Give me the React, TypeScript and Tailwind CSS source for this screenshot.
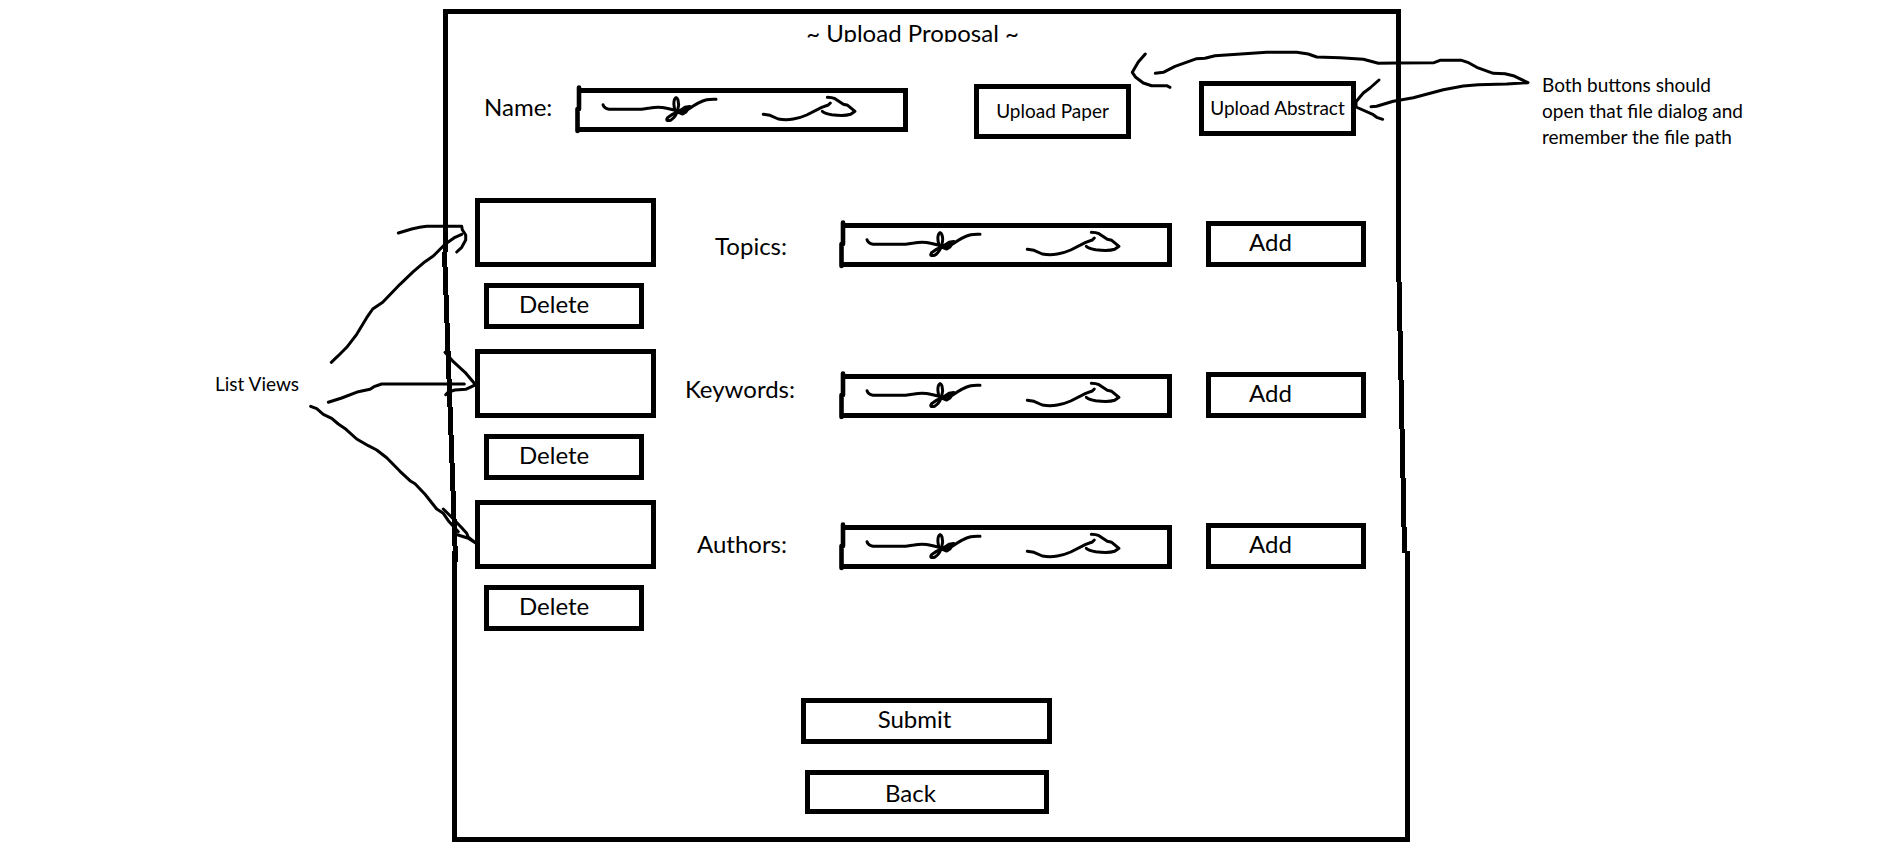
type Row = { id: string; label: string; labelClass: string };

const rows: Row[] = [
  { id: "topics", label: "Topics:", labelClass: "pt-8 pr-13" },
  { id: "keywords", label: "Keywords:", labelClass: "pt-6 pr-11" },
  { id: "authors", label: "Authors:", labelClass: "pt-7 pr-13" },
];

/* Text box with a pen-drawn left edge and scribbled contents. */
function SketchInput({ id }: { id: string }) {
  return (
    <div className="relative h-11 w-[333px] shrink-0 pl-[3px]">
      <input
        id={id}
        type="text"
        className="block h-full w-full border-[5px] border-l-0 border-black bg-white px-3 text-lg outline-none"
      />
      <svg
        className="pointer-events-none absolute top-0 left-0 overflow-visible"
        width="333"
        height="44"
        fill="none"
        stroke="black"
        strokeWidth="3"
        strokeLinecap="round"
        strokeLinejoin="round"
        aria-hidden="true"
      >
        <path d="M4 -0.5V21M2.5 21V43" strokeWidth="4.6" />
        <path d="M28 16.7Q29 20.5 34 21.3H66.7L75 20Q84 18.200 91.700 20.300L100 22.300Q98 15 99.500 11.500Q101.500 7.500 103 12Q104.500 17 102.700 22Q101 29 95.700 32.300Q89.500 33.500 93 29.300Q97 26 103.300 23.700L110 19.300L114.800 18.500L111 24L107.700 26L104 24.700L113.300 21.300Q124 13.500 131.700 11.700Q136 11 141 11.300" />
        <path d="M188.300 26.300L195 27.300L203.300 31Q211 32.300 218.300 31Q225 30 231.700 27L246.700 19.300L253.300 17L255.300 15" />
        <path d="M252.300 9.300Q257 9.300 260 10.700L268.300 16.300L272.700 17.300L280 23.300L275.700 26.300Q269 28.500 256.700 26.700Q250 25.500 247.300 23.300" />
      </svg>
    </div>
  );
}

/* Outline of the form: straight on top, drifting sides, straight below. */
function Frame() {
  return (
    <div className="pointer-events-none absolute inset-0 flex flex-col" aria-hidden="true">
      <div className="mr-[9px] h-[243px] border-x-[5px] border-t-[5px] border-black" />
      <div className="relative flex h-[299px] justify-between">
        <svg width="18" height="310" className="-ml-px shrink-0 overflow-visible" shapeRendering="crispEdges">
          <path d="M0 0H5V15H6V43H7V71H8V99H9V127H10V155H11V183H12V211H13V239H14V267H15V294H16V310H11V294H10V267H9V239H8V211H7V183H6V155H5V127H4V99H3V71H2V43H1V15H0Z" />
        </svg>
        <svg width="14" height="301" className="shrink-0 overflow-visible" shapeRendering="crispEdges">
          <path d="M0 0H5V30H6V79H7V128H8V177H9V226H10V275H11V299H14V301H6V275H5V226H4V177H3V128H2V79H1V30H0Z" />
        </svg>
      </div>
      <div className="ml-[9px] flex-1 border-x-[5px] border-b-[5px] border-black" />
    </div>
  );
}

function Arrows() {
  return (
    <svg
      className="pointer-events-none absolute top-0 left-0 z-10 overflow-visible"
      width="967"
      height="833"
      fill="none"
      stroke="black"
      strokeWidth="3"
      strokeLinecap="round"
      strokeLinejoin="round"
      aria-hidden="true"
    >
      <g transform="translate(-443 -9)">
        <path d="M398.300 233L411.700 229Q420 226.800 426.700 226.300H461.700L462.300 229.700L465.700 235V240L461.700 247.300L456.700 252" />
        <path d="M331.300 362.300L338.300 355.700L346.700 347.300L356.700 334.300L366.700 317.700L372.700 309L382.700 302.300L400 284.300L413.300 271.700L425 261.700L433.300 256L445 244.300L455 237.300L461.700 234.300" />
        <path d="M328.300 402.300L341.700 398L358.300 391.700L370 389.300L374 386.700L381.700 384H464.300" />
        <path d="M445 352.300L453.300 361.700L465 372.300L474.300 383.300V385.300L465.700 389.300L455 390L448.300 392L445.700 394.700" />
        <path d="M310.700 406.300L316.700 408.700L323.300 414.300L331.700 418.300L338.300 424L346 429.300L356.700 439L368.300 445.700L376.700 450L386.700 457.700L400 471.300L410 480.700L415 483.700L425 494.300L436.700 509L443.300 513.300L448.300 520.700L458.300 531.700" />
        <path d="M443.300 509L451.700 517.300L461.700 527.700L466.700 533.300L468.300 537.300L476 543.300M455 534L468.300 538.300L476 543.300" />
        <path d="M1155.300 73.300L1163.300 72.300L1175 66.300L1196.700 58.700L1205 58.300L1215 55.700L1266.700 52.300H1296.700L1308.300 54L1316.700 57L1340 57.700L1363.300 59.300L1378.300 63.300L1396.700 63L1434 62.700L1440 60.300H1461.700L1467.700 62.300L1476.700 67.300L1493.300 73.300L1505 73.700L1513.300 75.700L1528 82.700L1506.700 84L1478.300 84.700L1463.300 86L1443.300 89.700L1413.300 97.700L1393.300 101.300L1376.700 106.300L1371 106.700" />
        <path d="M1145.300 54L1138.300 62L1132.300 72.300L1135.700 77.300L1143.300 83L1151.700 85.700H1166.700L1170 87.300" />
        <path d="M1379 80L1370 88L1363.300 93L1356 101.700V107L1373.300 114.700L1376.700 117.300L1382.700 119.300" />
      </g>
    </svg>
  );
}

const box = "shrink-0 border-[5px] border-black bg-white";

export default function App() {
  return (
    <main className="grid min-h-screen grid-cols-[minmax(0,443fr)_967px_minmax(0,491fr)] items-start overflow-x-hidden bg-white pt-[9px] font-['Lato',sans-serif] text-2xl leading-8 text-black">
      <aside className="pt-[362px] pr-36 text-right text-[19px] leading-[26px] whitespace-nowrap">List Views</aside>

      <section className="relative pb-7">
        <Frame />
        <Arrows />

        <h1 className="h-[33px] overflow-hidden pt-2 pr-7 text-center">~ Upload Proposal ~</h1>

        <div className="mt-[39px] flex h-[58px] items-center pl-[41px]">
          <label htmlFor="name" className="w-[91px] shrink-0 pb-1.5">
            Name:
          </label>
          <SketchInput id="name" />
          <button
            type="button"
            className={`${box} ml-[66px] h-[55px] w-[157px] self-end pb-0.5 text-[19px] whitespace-nowrap`}
          >
            Upload Paper
          </button>
          <button
            type="button"
            className={`${box} ml-[68px] h-[55px] w-[157px] self-start pb-0.5 text-[19px] whitespace-nowrap`}
          >
            Upload Abstract
          </button>
        </div>

        <div className="mt-[59px] flex flex-col gap-5 pl-8">
          {rows.map((row) => (
            <div key={row.id}>
              <div className="flex h-[69px] items-end">
                <ul aria-label={row.label} className={`${box} h-full w-[181px]`} />
                <label htmlFor={row.id} className={`w-[183px] shrink-0 self-start text-right ${row.labelClass}`}>
                  {row.label}
                </label>
                <SketchInput id={row.id} />
                <button type="button" className={`${box} ml-[34px] h-[46px] w-40 pb-1.5 pl-[38px] text-left`}>
                  Add
                </button>
              </div>
              <button type="button" className={`${box} mt-4 ml-[9px] block h-[46px] w-40 pb-1 pl-[30px] text-left`}>
                Delete
              </button>
            </div>
          ))}
        </div>

        <div className="mt-[67px] flex flex-col items-center gap-[26px]">
          <button type="submit" className={`${box} h-[46px] w-[251px] pr-6 pb-1.5`}>
            Submit
          </button>
          <button type="button" className={`${box} h-11 w-[244px] pt-0.5 pr-8`}>
            Back
          </button>
        </div>
      </section>

      <aside className="pt-[63px] pl-[132px] text-[19px] leading-[26px] whitespace-nowrap">
        Both buttons should
        <br />
        open that file dialog and
        <br />
        remember the file path
      </aside>
    </main>
  );
}
